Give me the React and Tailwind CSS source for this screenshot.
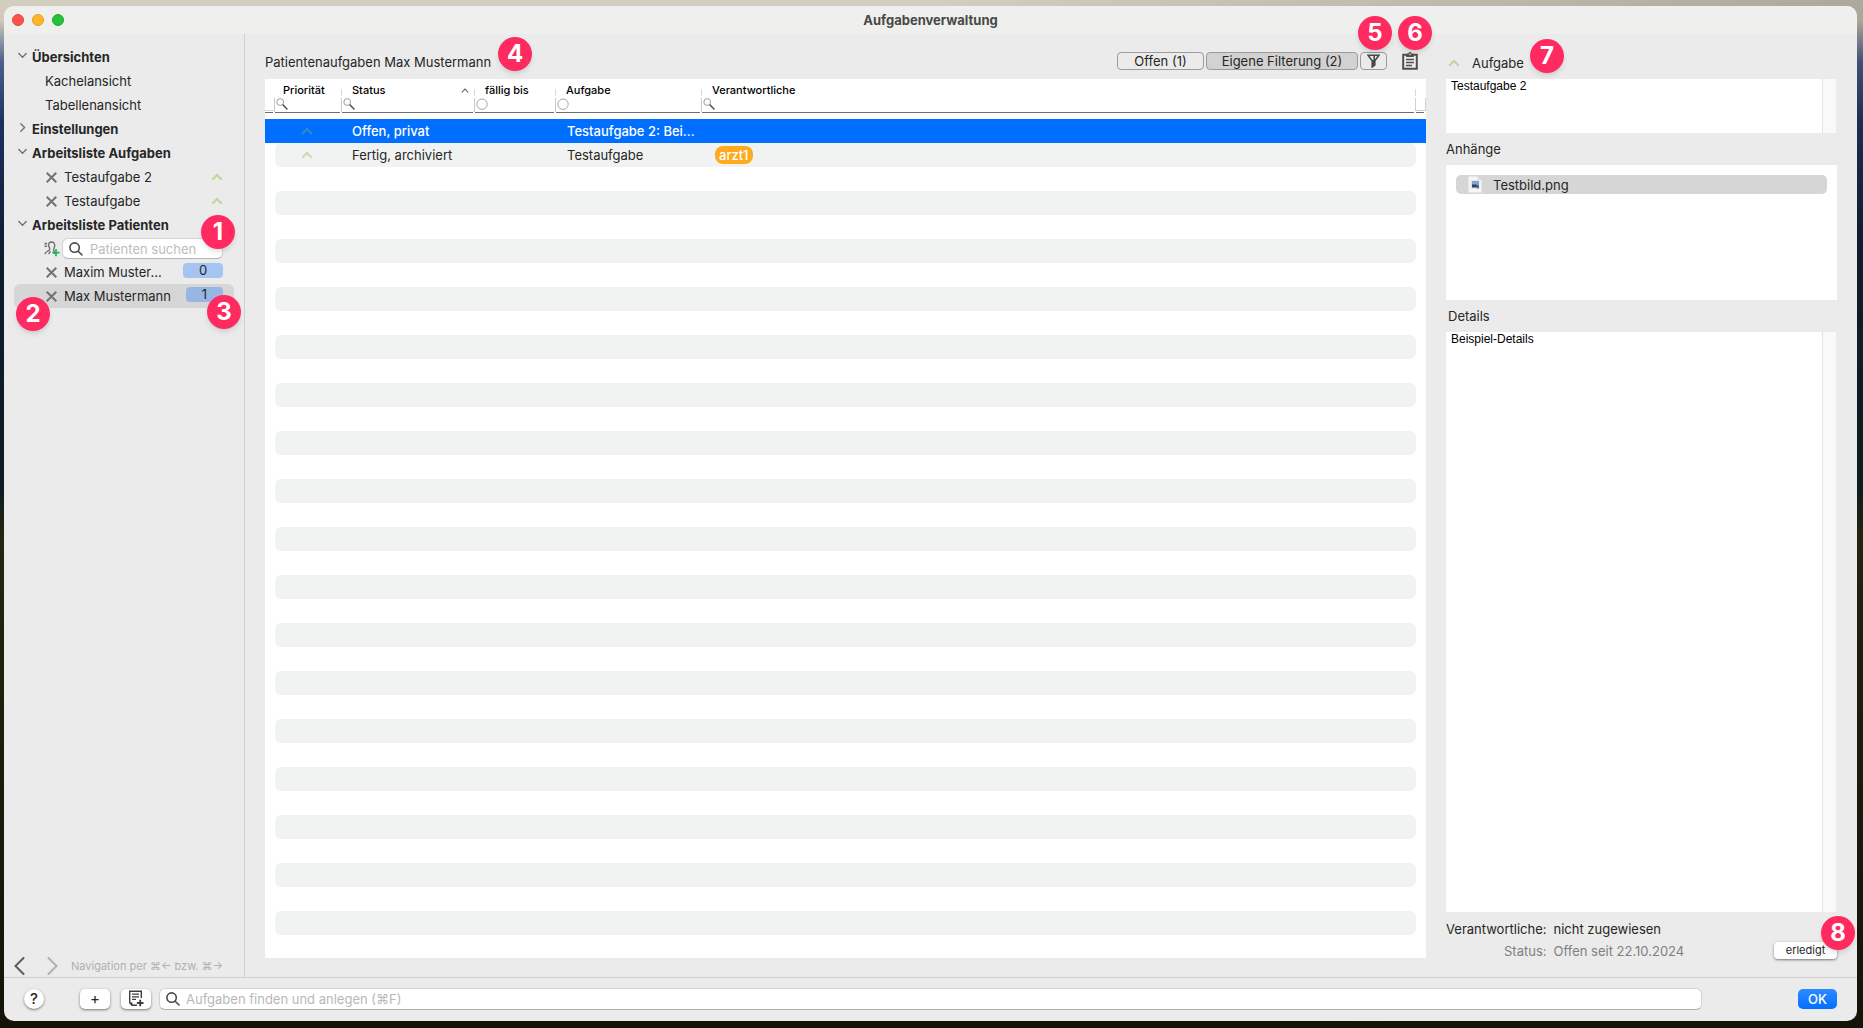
import { useState } from 'react';
import clsx from 'clsx';

const columns = [
  { name: 'Priorität', width: 'w-[67px]', filter: 'search', inset: 'pl-[8px]' },
  { name: 'Status', width: 'w-[133px]', filter: 'search', inset: 'pl-[10px]', divider: true, sorted: true },
  { name: 'fällig bis', width: 'w-[81px]', filter: 'circle', inset: 'pl-[10px]', divider: true },
  { name: 'Aufgabe', width: 'w-[146px]', filter: 'circle', inset: 'pl-[10px]', divider: true },
  { name: 'Verantwortliche', width: '', filter: 'search', inset: 'pl-[10px]', divider: true },
];

const tasks = [
  { status: 'Offen, privat', title: 'Testaufgabe 2: Bei...', owner: null },
  { status: 'Fertig, archiviert', title: 'Testaufgabe', owner: 'arzt1' },
];

const ROW_COUNT = 34;
const rows = Array.from({ length: ROW_COUNT }, (_, i) => tasks[i] || null);

const Chevron = ({ open }) => (
  <svg width="9" height="9" viewBox="0 0 9 9" fill="none" stroke="#6e6e6e" strokeWidth="1.3" strokeLinecap="round" strokeLinejoin="round" className="mb-[3px]">
    {open ? <path d="M0.8 2.5 4.5 6.3 8.2 2.5" /> : <path d="M2.8 0.8 6.6 4.5 2.8 8.2" />}
  </svg>
);

const PriorityIcon = ({ className = 'text-[#bcd898]' }) => (
  <svg width="12" height="8" viewBox="0 0 12 8" fill="none" stroke="currentColor" strokeWidth="2" className={className}>
    <path d="M1.2 6.8 6 2 10.8 6.8" />
  </svg>
);

const CloseIcon = () => (
  <svg width="11" height="11" viewBox="0 0 11 11" fill="none" stroke="#737373" strokeWidth="2">
    <path d="M0.7 0.7 10.3 10.3M10.3 0.7 0.7 10.3" />
  </svg>
);

const SearchIcon = () => (
  <svg width="14" height="14" viewBox="0 0 14 14" fill="none" stroke="#4a4a4a" strokeWidth="1.6" strokeLinecap="round" className="shrink-0">
    <circle cx="5.6" cy="5.6" r="4.7" />
    <path d="M9.2 9.2 13 13" />
  </svg>
);

const ColumnSearchIcon = () => (
  <svg width="12" height="12" viewBox="0 0 12 12" fill="none" className="shrink-0">
    <circle cx="4.2" cy="4" r="3.4" stroke="#9c9c9c" strokeWidth="1" />
    <path d="M6.7 6.5 11.4 11.4" stroke="#4a4a4a" strokeWidth="1.4" />
  </svg>
);

const CircleIcon = () => (
  <svg width="12" height="12" viewBox="0 0 12 12" fill="none" className="shrink-0">
    <circle cx="6" cy="6.2" r="5.2" stroke="#a6a6a6" strokeWidth="1" />
  </svg>
);

const AddPatientIcon = () => (
  <svg width="16" height="16" viewBox="0 0 16 16" fill="none" className="shrink-0">
    <path d="M0.5 2.6h2.6M0.5 5.2h2.6" stroke="#737373" strokeWidth="1.6" />
    <path
      d="M4.6 4.2C4.6 1.8 6 1 7.6 1c2.2 0 3.3 1.5 3.1 3.8-.2 1.6-1 2.7-1 4 0 1.6.6 2.6.8 4.2M4.6 4.200c-.1 1.6 1.2 2.3 1.1 3.7-.1 1.5-.9 1.4-1.900 2.100-1.500.7-2.800 1.300-2.800 3.200M6.300 10.200c-.3 1.400-.8 2.200-1.900 2.700"
      stroke="#6b6b6b"
      strokeWidth="1.3"
    />
    <path d="M12 8v7.2M8.4 11.6h7.2" stroke="#1fb45a" strokeWidth="1.7" />
  </svg>
);

const FunnelIcon = () => (
  <svg width="13" height="14" viewBox="0 0 13 14" fill="none" stroke="#4a4a4a">
    <path d="M1 1.2h11L7.8 6.8v4.4L5.2 13V6.8z" strokeWidth="1.6" />
    <path d="M5.2 6h2.600v5.300L5.200 12.800z" fill="#4a4a4a" stroke="none" />
    <path d="M7.200 2v5" strokeWidth="1.6" />
  </svg>
);

const ClipboardIcon = () => (
  <svg width="16" height="18" viewBox="0 0 16 18" fill="none" stroke="#4f4f4f">
    <path d="M1.200 2.700h13.600v14.100H1.200z" strokeWidth="2" />
    <path d="M4.2 1.800h2.100a1.700 1.700 0 0 1 3.400 0h2.100v3.200H4.200z" fill="#4f4f4f" stroke="none" />
    <circle cx="8" cy="2.4" r="0.8" fill="#ebebeb" stroke="none" />
    <path d="M4 7.500h8M4 10.500h8M4 13.500h6" strokeWidth="1.4" />
  </svg>
);

const NewNoteIcon = () => (
  <svg width="16" height="17" viewBox="0 0 16 17" fill="none" stroke="#3d3d3d">
    <path d="M13.3 8V1.2H1.7v11.6l2.3 2.5h5" strokeWidth="1.4" />
    <path d="M1.5 12.5h3v3z" fill="#3d3d3d" stroke="none" />
    <path d="M4 4.2h7M4 6.8h7M4 9.4h4" strokeWidth="1.2" />
    <path d="M12.2 9.7v6.6M8.9 13h6.6" strokeWidth="1.9" />
  </svg>
);

const ImageFileIcon = () => (
  <svg width="14" height="17" viewBox="0 0 14 17">
    <path d="M0.5 0.5h9l4 4v12h-13z" fill="#f6f6f6" stroke="#e4e4e4" strokeWidth="0.5" />
    <path d="M9.5 0.5v4h4z" fill="#dedede" />
    <rect x="2.5" y="4" width="9" height="9" fill="#e2e4e8" />
    <rect x="4" y="5" width="7" height="5" fill="#7da3dd" />
    <path d="M4 8.5h4l3 1.5v1.5H4z" fill="#34405c" />
    <path d="M7.5 10.5h3.5v2H9z" fill="#777" />
  </svg>
);

const Marker = ({ number, className }) => (
  <span
    className={clsx(
      'absolute z-10 flex size-[34px] items-center justify-center rounded-full bg-[#ff2a5f] text-2xl font-bold text-white shadow-md shadow-black/10',
      className
    )}
  >
    {number}
  </span>
);

const SidebarGroup = ({ title, defaultOpen = true, children }) => {
  const [open, setOpen] = useState(defaultOpen);

  return (
    <section>
      <button type="button" onClick={() => setOpen(!open)} className="flex h-6 w-full items-center gap-[5px] px-1 font-bold">
        <Chevron open={open} />
        {title}
      </button>
      {open && children}
    </section>
  );
};

const Sidebar = () => (
  <aside className="flex w-[241px] shrink-0 flex-col justify-between border-r border-[#d0d0d0]">
    <nav className="px-[10px] pt-[11px]">
      <SidebarGroup title="Übersichten">
        <a href="#kacheln" className="flex h-6 items-center pl-[31px]">Kachelansicht</a>
        <a href="#tabelle" className="flex h-6 items-center pl-[31px]">Tabellenansicht</a>
      </SidebarGroup>
      <SidebarGroup title="Einstellungen" defaultOpen={false} />
      <SidebarGroup title="Arbeitsliste Aufgaben">
        {['Testaufgabe 2', 'Testaufgabe'].map((name) => (
          <div key={name} className="flex h-6 items-center gap-[7px] pr-[11px] pl-8">
            <button type="button" aria-label={`${name} entfernen`}>
              <CloseIcon />
            </button>
            <a href="#aufgabe" className="flex-1">{name}</a>
            <PriorityIcon />
          </div>
        ))}
      </SidebarGroup>
      <SidebarGroup title="Arbeitsliste Patienten">
        <div className="relative flex h-[23px] items-center gap-[2px] pr-[11px] pl-[30px]">
          <button type="button" aria-label="Patient hinzufügen">
            <AddPatientIcon />
          </button>
          <label className="flex h-[21px] min-w-0 flex-1 items-center gap-[7px] rounded-md border border-[#d2d2d2] border-b-[#b5b5b5] bg-white px-[6px]">
            <SearchIcon />
            <input
              type="search"
              aria-label="Patienten suchen"
              placeholder="Patienten suchen"
              className="w-full min-w-0 bg-transparent outline-none placeholder:text-[#bdbdbd]"
            />
          </label>
          <Marker number={1} className="right-[-1px] bottom-[11px]" />
        </div>
        <div className="flex h-6 items-center gap-[7px] pr-[11px] pl-8">
          <button type="button" aria-label="Maxim Mustermann entfernen">
            <CloseIcon />
          </button>
          <a href="#maxim" className="flex-1">Maxim Muster...</a>
          <span className="mb-1 h-[15px] w-10 rounded bg-[#a5c4f1] text-center leading-[15px]">0</span>
        </div>
        <div className="relative flex h-6 items-center gap-[7px] rounded-md bg-[#d6d6d6] pr-[11px] pl-8">
          <button type="button" aria-label="Max Mustermann entfernen">
            <CloseIcon />
          </button>
          <a href="#max" className="flex-1">Max Mustermann</a>
          <span className="mb-1 h-[15px] w-[37px] rounded bg-[#97b6e4] text-center leading-[15px]">1</span>
          <Marker number={2} className="top-[13px] left-[2px]" />
          <Marker number={3} className="top-[11px] right-[-7px]" />
        </div>
      </SidebarGroup>
    </nav>

    <div className="flex h-[22px] items-center pl-[10px] text-[11px] text-[#b0b0b0]">
      <button type="button" aria-label="Zurück" className="mr-[22px]">
        <svg width="11" height="18" viewBox="0 0 11 18" fill="none" stroke="#5c5c5c" strokeWidth="2" strokeLinecap="round">
          <path d="M9.5 1 1.5 9l8 8" />
        </svg>
      </button>
      <button type="button" aria-label="Vor" className="mr-[13px]">
        <svg width="11" height="18" viewBox="0 0 11 18" fill="none" stroke="#b0b0b0" strokeWidth="2" strokeLinecap="round">
          <path d="m1.5 1 8 8-8 8" />
        </svg>
      </button>
      Navigation per ⌘← bzw. ⌘→
    </div>
  </aside>
);

const HeaderCell = ({ column }) => (
  <th className={clsx('p-0 text-left align-top font-medium', column.width)}>
    <div className="flex h-[19px] items-center">
      {column.divider && <span className="mt-2 -ml-px h-[7px] w-px bg-[#d8d8d8]" />}
      <span className={clsx('flex-1 pt-[3px]', column.inset)}>{column.name}</span>
      {column.sorted && (
        <svg width="8" height="5" viewBox="0 0 8 5" fill="none" stroke="#555" strokeWidth="1.1" className="mt-[3px] mr-[6px]">
          <path d="M0.8 4.5 4 1l3.2 3.5" />
        </svg>
      )}
    </div>
    <label className="-ml-px flex h-[14px] items-start border-l border-[#c9c9c9] pl-px">
      {column.filter === 'search' ? <ColumnSearchIcon /> : <CircleIcon />}
      <input type="text" aria-label={`${column.name} filtern`} className="h-3 w-full min-w-0 bg-transparent outline-none" />
    </label>
    <div className="mr-[2px] h-px bg-[#6f6f6f]" />
  </th>
);

const TaskRow = ({ task, index }) => {
  const selected = index === 0;
  const striped = index % 2 === 1;
  const cell = clsx('p-0', selected && 'bg-[#006fff]', striped && 'bg-[#f1f3f2]');

  return (
    <tr className={clsx('h-6', selected && 'font-medium text-white')}>
      <td className={clsx('p-0', selected && 'bg-[#006fff]')} />
      <td className={clsx(cell, striped && 'rounded-l-md')}>
        {task && <PriorityIcon className={clsx('ml-[26px]', selected ? 'text-[#2f8cc0]' : 'text-[#c5dfa8]')} />}
      </td>
      <td className={clsx(cell, 'pb-px pl-[10px]')}>{task?.status}</td>
      <td className={cell} />
      <td className={clsx(cell, 'pb-px pl-[11px] whitespace-nowrap')}>{task?.title}</td>
      <td className={clsx(cell, 'pb-px pl-[13px]', striped && 'rounded-r-md')}>
        {task?.owner && (
          <span className="inline-block h-[18px] rounded-lg bg-[#fdab1d] px-1 align-middle leading-[18px] font-medium text-white">
            {task.owner}
          </span>
        )}
      </td>
      <td className={clsx('p-0', selected && 'bg-[#006fff]')} />
    </tr>
  );
};

const TaskTable = () => (
  <div className="min-h-0 flex-1 overflow-hidden bg-white">
    <table className="w-full table-fixed border-separate border-spacing-0">
      <thead className="text-[11px] leading-[14px] text-black">
        <tr className="h-10">
          <th className="w-[10px] p-0 align-top">
            <div className="mt-[19px] mb-px h-[13px] border-b border-[#d8d8d8]" />
            <div className="mr-[2px] h-px bg-[#6f6f6f]" />
          </th>
          {columns.map((column) => (
            <HeaderCell key={column.name} column={column} />
          ))}
          <th className="w-[10px] p-0 align-top">
            <div className="mt-[10px] mb-[2px] -ml-px h-[7px] border-l border-[#d8d8d8]" />
            <div className="mb-px -ml-px h-[13px] border border-t-0 border-[#d0d0d0]" />
            <div className="mr-[2px] h-px bg-[#6f6f6f]" />
          </th>
        </tr>
      </thead>
      <tbody>
        {rows.map((task, i) => (
          <TaskRow key={i} task={task} index={i} />
        ))}
      </tbody>
    </table>
  </div>
);

const TaskList = () => (
  <main className="flex min-w-0 flex-1 flex-col pt-[18px] pb-[19px] pl-5">
    <div className="relative mb-[9px] flex h-[18px] items-center">
      <h2 className="relative flex-1 pt-px">
        Patientenaufgaben Max Mustermann
        <Marker number={4} className="top-[-16px] left-[233px]" />
      </h2>
      <div className="flex items-center gap-[2px]">
        <button type="button" className="h-[18px] w-[87px] rounded border border-[#9b9b9b] leading-4">Offen (1)</button>
        <button type="button" className="h-[18px] w-[152px] rounded border border-[#9b9b9b] bg-[#d2d2d2] leading-4">
          Eigene Filterung (2)
        </button>
        <button type="button" aria-label="Filter" className="flex h-[18px] w-[27px] items-center justify-center rounded border border-[#9b9b9b]">
          <FunnelIcon />
        </button>
      </div>
      <button type="button" aria-label="Zwischenablage" className="mr-2 ml-[15px]">
        <ClipboardIcon />
      </button>
      <Marker number={5} className="right-[34px] bottom-5" />
      <Marker number={6} className="right-[-6px] bottom-5" />
    </div>
    <TaskTable />
  </main>
);

const TextPanel = ({ id, value, className }) => (
  <div className={clsx('mr-px flex bg-white', className)}>
    <textarea
      id={id}
      defaultValue={value}
      className="flex-1 resize-none overflow-hidden px-[5px] font-['Liberation_Sans',sans-serif] text-xs leading-[14px] text-black outline-none"
    />
    <div className="w-[14px] border-l border-[#e2e2e2] bg-[#f9f9f9]" />
  </div>
);

const DetailPanel = () => (
  <aside className="flex w-[391px] shrink-0 flex-col pt-[19px]">
    <div className="mb-[7px] flex h-[19px] items-center gap-3 pl-[2px]">
      <PriorityIcon />
      <label htmlFor="task" className="relative">
        Aufgabe
        <Marker number={7} className="top-[-16px] left-[58px]" />
      </label>
    </div>
    <TextPanel id="task" value="Testaufgabe 2" className="h-[54px]" />

    <h3 className="flex h-8 items-center">Anhänge</h3>
    <div className="h-[135px] bg-white p-[10px]">
      <a href="#testbild" className="flex h-[19px] items-center gap-[11px] rounded-[5px] bg-[#d6d6d6] pl-3">
        <ImageFileIcon />
        Testbild.png
      </a>
    </div>

    <label htmlFor="details" className="flex h-8 items-center pl-[2px]">Details</label>
    <TextPanel id="details" value="Beispiel-Details" className="min-h-0 flex-1" />

    <div className="relative flex items-end justify-between pt-[6px] pb-[15px]">
      <dl className="grid grid-cols-[auto_auto] gap-x-[7px] leading-[22px]">
        <dt className="text-right">Verantwortliche:</dt>
        <dd>nicht zugewiesen</dd>
        <dt className="text-right text-[#7f7f7f]">Status:</dt>
        <dd className="text-[#7f7f7f]">Offen seit 22.10.2024</dd>
      </dl>
      <button type="button" className="mb-[3px] h-[17px] w-[63px] rounded bg-white text-[11px] leading-[17px] shadow-sm shadow-black/40">erledigt</button>
      <Marker number={8} className="top-1 right-[-18px]" />
    </div>
  </aside>
);

const Footer = () => (
  <footer className="flex h-[44px] shrink-0 items-center border-t border-[#cfcfcf] px-5 pb-[2px]">
    <button type="button" className="mr-9 size-5 rounded-full bg-white text-[15px] leading-5 font-medium shadow-sm shadow-black/40">
      ?
    </button>
    <button type="button" aria-label="Neue Aufgabe" className="mr-[11px] h-5 w-[30px] rounded-[5px] bg-white text-[15px] leading-[18px] shadow-sm shadow-black/40">
      +
    </button>
    <button type="button" aria-label="Neue Notiz" className="mr-2 flex h-5 w-[30px] items-center justify-center rounded-[5px] bg-white shadow-sm shadow-black/40">
      <NewNoteIcon />
    </button>
    <label className="mr-24 flex h-[22px] min-w-0 flex-1 items-center gap-[6px] rounded-md border border-[#d2d2d2] border-b-[#b0b0b0] bg-white px-[6px]">
      <SearchIcon />
      <input
        type="search"
        aria-label="Aufgaben finden und anlegen"
        placeholder="Aufgaben finden und anlegen (⌘F)"
        className="w-full bg-transparent outline-none placeholder:text-[#b8b8b8]"
      />
    </label>
    <button type="button" className="h-5 w-[39px] rounded-[5px] bg-linear-to-b from-[#2a8bff] to-[#006fff] font-medium text-white">OK</button>
  </footer>
);

const App = () => {
  return (
    <div className="flex h-screen bg-[linear-gradient(to_right,transparent_50%,rgba(20,25,20,0.2)_100%),linear-gradient(to_bottom,#d3cebf_0%,#cfcabc_2%,#4b618b_6%,#1d315f_12%,#0d1c30_25%,#101c22_48%,#232710_52%,#1c1b0c_75%,#151306_100%)] pt-[6px] pr-[6px] pb-[7px] pl-1 font-[Inter,sans-serif] text-[13px] leading-4 text-[#262626]">
      <div className="flex min-w-0 flex-1 flex-col overflow-hidden rounded-[10px] bg-[#ebebeb]">
        <header className="flex h-7 shrink-0 items-center bg-[#efefed] px-2">
          <div className="flex flex-1 gap-2">
            <button type="button" aria-label="Schließen" className="size-3 rounded-full border border-[#e0443e] bg-[#ff544d]" />
            <button type="button" aria-label="Minimieren" className="size-3 rounded-full border border-[#dea123] bg-[#ffb429]" />
            <button type="button" aria-label="Maximieren" className="size-3 rounded-full border border-[#1aab29] bg-[#25c138]" />
          </div>
          <h1 className="font-bold text-[#484848]">Aufgabenverwaltung</h1>
          <div className="flex-1" />
        </header>
        <div className="flex min-h-0 flex-1">
          <Sidebar />
          <div className="flex min-w-0 flex-1 gap-5 pr-5">
            <TaskList />
            <DetailPanel />
          </div>
        </div>
        <Footer />
      </div>
    </div>
  );
};

export default App;
